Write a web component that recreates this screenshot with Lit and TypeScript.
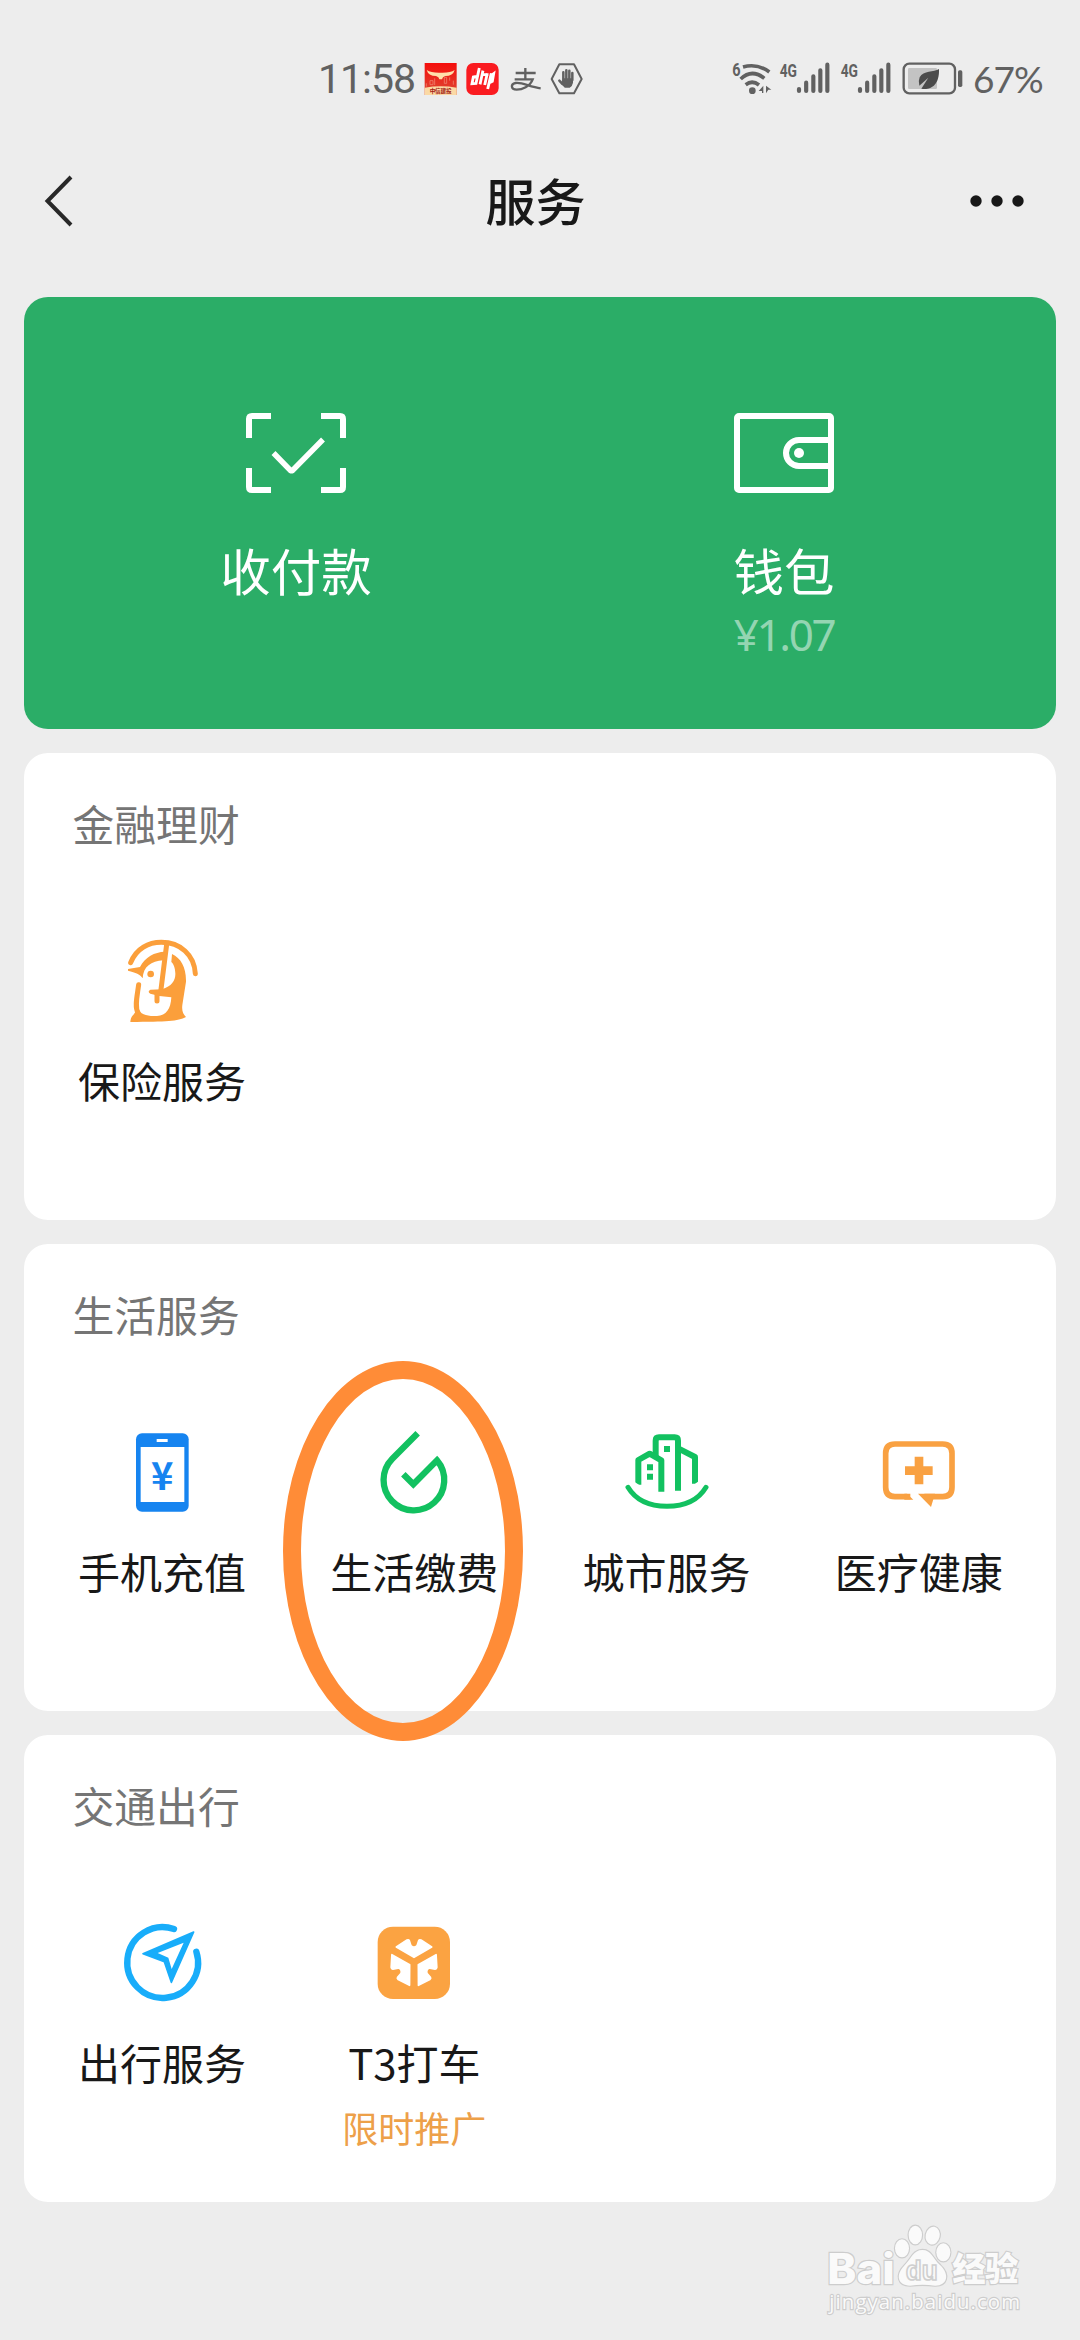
import { LitElement, html, svg, css, nothing, SVGTemplateResult } from "lit";
import { customElement, property } from "lit/decorators.js";

interface Service {
  label: string;
  note?: string;
  viewBox: string;
  icon: SVGTemplateResult;
}

const insurance = svg`
  <path d="M211 548C228 505 265 487 303 487C360 487 402 525 405 581" fill="none" stroke="#fb9f3b" stroke-width="15" stroke-linecap="round"/>
  <path d="M203 567L239 561C254 531 283 516 313 515L309 541C272 543 249 560 247 595C240 583 226 578 203 572Z" fill="#fb9f3b"/>
  <circle cx="271" cy="582" r="10" fill="#fb9f3b"/>
  <path d="M319 493L301 636M235 614C231 645 222 680 233 698M290 640V663" fill="none" stroke="#fb9f3b" stroke-width="15" stroke-linecap="round"/>
  <path d="M335 522C362 535 378 562 377 605L366 675C364 693 368 702 377 711C352 724 320 725 210 726C211 712 216 708 221 702L232 685C240 704 262 710 290 708C318 706 331 688 333 652L297 648L270 641Q260 635 270 629L305 628C335 618 346 600 345 580C344 562 340 552 333 546Z" fill="#fb9f3b"/>`;

const phone = svg`
  <rect x="227" y="460" width="158" height="235" rx="18" fill="#1684f0"/>
  <rect x="241" y="501" width="131" height="165" fill="#fff"/>
  <rect x="289" y="477" width="33" height="9" fill="#fff"/>
  <text x="306" y="629" font-size="114" font-weight="700" text-anchor="middle" fill="#1684f0" font-family="Noto Sans CJK SC, sans-serif">¥</text>`;

const drop = svg`
  <path d="M443 280L367 356A91 91 0 1 0 501 361L430 433L400 403" fill="none" stroke="#12c160" stroke-width="19"/>`;

const city = svg`
  <g fill="none" stroke="#12c160" stroke-width="18" stroke-linejoin="round">
    <path d="M284 172V122Q284 112 294 112H341Q351 112 351 122V272"/>
    <path d="M232 254V180L266 161L301 181V275"/>
    <path d="M353 146L402 171V251"/>
    <path d="M201 262C225 302 268 319 318 319S411 302 435 262" stroke-width="15" stroke-linecap="round"/>
  </g>
  <path d="M309 138h18v18h-18zM258 193h18v18h-18zM258 221h18v18h-18z" fill="#12c160"/>
  <path d="M220 245L245 262H220ZM390 260L415 242V262Z" fill="#fff"/>`;

const medical = svg`
  <path d="M1048 290H1002Q974 290 974 262V160Q974 132 1002 132H1145Q1173 132 1173 160V262Q1173 290 1145 290H1090" fill="none" stroke="#f9a142" stroke-width="17"/>
  <path d="M1030 281H1038L1057 299H1030ZM1071 281H1122L1110 321Z" fill="#f9a142"/>
  <path d="M1032 199h29v-29h26v29h28v26h-28v28h-26v-28h-29z" fill="#f9a142"/>`;

const travel = svg`
  <path d="M341 477A106.200 106.200 0 1 0 408 545" fill="none" stroke="#18adfa" stroke-width="19" stroke-linecap="round"/>
  <path d="M400 486L333 637L312 575L248 551Z" fill="#18adfa" stroke="#18adfa" stroke-width="5" stroke-linejoin="round"/>
  <path d="M370 518L334 597L324 563L292 549Z" fill="#fff"/>`;

const petal = "M1009 531L1041 510Q1046 508 1048 512L1053 527Q1062 536 1071 527L1076 512Q1078 508 1083 510L1115 531L1062 562Z";
const taxi = svg`
  <rect x="953" y="470" width="217" height="217" rx="46" fill="#fba342"/>
  <g fill="#fff" stroke="#fff" stroke-width="5" stroke-linejoin="round">
    <path d=${petal}/>
    <path d=${petal} transform="rotate(120 1062 577)"/>
    <path d=${petal} transform="rotate(240 1062 577)"/>
  </g>`;

const sections: { title: string; items: Service[] }[] = [
  { title: "金融理财", items: [{ label: "保险服务", viewBox: "161 459 288 288", icon: insurance }] },
  {
    title: "生活服务",
    items: [
      { label: "手机充值", viewBox: "161 432 288 288", icon: phone },
      { label: "生活缴费", viewBox: "288 252 288 288", icon: drop },
      { label: "城市服务", viewBox: "174 72 288 288", icon: city },
      { label: "医疗健康", viewBox: "930 72 288 288", icon: medical },
    ],
  },
  {
    title: "交通出行",
    items: [
      { label: "出行服务", viewBox: "161 435 288 288", icon: travel },
      { label: "T3打车", note: "限时推广", viewBox: "918 435 288 288", icon: taxi },
    ],
  },
];

@customElement("status-bar")
class StatusBar extends LitElement {
  static styles = css`
    :host { display: flex; height: 120px; padding: 38px 0 0 318px; box-sizing: border-box; color: #616161; }
    .time { flex: none; width: 105px; font: 400 41px/82px Roboto, sans-serif; letter-spacing: -1px; white-space: nowrap; }
    .apps { width: 162px; height: 80px; margin-top: 2px; }
    .signals { width: 235px; height: 80px; margin: 2px 0 0 145px; }
    .battery { flex: none; margin-left: 8px; font: 400 37px/82px Lato, sans-serif; letter-spacing: -1px; white-space: nowrap; }
    svg { display: block; flex: none; }
  `;

  private bars(x: number) {
    return svg`<g stroke="#616161" stroke-width="12.5" stroke-linecap="round">
      <path d="M${x} 147V153M${x + 21.5} 128V153M${x + 43} 109V153M${x + 64} 91V153M${x + 85} 74V153"/></g>
      <text x=${x - 58} y="110" font-size="57" font-weight="700" textLength="52" lengthAdjust="spacingAndGlyphs" fill="#616161" font-family="Roboto, sans-serif">4G</text>`;
  }

  render() {
    return html`
      <span class="time">11:58</span>
      <svg class="apps" viewBox="370 0 486 240">
        <defs><linearGradient id="red" x1="0" y1="0" x2="0" y2="1"><stop offset="0" stop-color="#f50d0b"/><stop offset="1" stop-color="#dc4a35"/></linearGradient></defs>
        <rect x="375" y="69" width="96" height="96" fill="url(#red)"/>
        <path d="M381 90Q395 99 423 98Q452 99 465 90Q460 108 437 108L430 112L427 118H419L416 112L409 108Q386 108 381 90Z" fill="#ffe0ac"/>
        <path d="M391 122h9v12h-9zM405 115v20M434 112h7v18h-7zM450 112v10M461 122v12M380 130v10" fill="none" stroke="#ee806c" stroke-width="2.5"/>
        <path d="M375 143Q423 135 471 143V165H375Z" fill="#fbd9a5"/>
        <text x="390" y="160" font-size="17" font-weight="700" textLength="66" fill="#a32014" font-family="Noto Sans CJK SC, sans-serif">中信建投</text>
        <rect x="500" y="69" width="97" height="96" rx="21" fill="#fa1b20"/>
        <g fill="none" stroke="#fff" stroke-width="8.5" stroke-linecap="square">
          <path d="M538 88L529 130L517 131L521 111L531 109M549 96L542 129M562 104L556 131M549 104L562 104M574 104L565 143M575 106L582 101L578 124L570 128"/>
        </g>
        <g fill="none" stroke="#616161" stroke-width="7">
          <path d="M648 99H708M677 84V117M645 118H699C691 140 667 149 651 149C633 149 632 132 648 129C668 126 690 141 723 145"/>
        </g>
        <path d="M756 117L779 73H823L846 117L823 160H779Z" fill="none" stroke="#616161" stroke-width="6" stroke-linejoin="round"/>
        <g stroke="#616161" stroke-width="7.5" stroke-linecap="round" fill="#616161">
          <path d="M791 118V97M800 116V91M809 116V92M818 120V99M779 122L788 132" fill="none"/>
          <path d="M791 117H818V128Q816 138 810 141H796Q788 134 786 128Z" stroke-width="4"/>
        </g>
      </svg>
      <svg class="signals" viewBox="60 0 705 240">
        <text x="67" y="107" font-size="53" font-weight="700" textLength="25" lengthAdjust="spacingAndGlyphs" fill="#616161" font-family="Roboto, sans-serif">6</text>
        <g fill="none" stroke="#616161" stroke-width="11">
          <path d="M99 81Q142 69 178 96M92 117Q125 85 163 115M107 134Q127 119 147 135"/>
        </g>
        <circle cx="127" cy="152" r="10" fill="#616161"/>
        <path d="M146 153L160 137V159H156V153ZM168 137L184 149H175L168 160Z" fill="#616161"/>
        ${this.bars(267)}${this.bars(450)}
        <rect x="581" y="71" width="154" height="89" rx="17" fill="none" stroke="#616161" stroke-width="7"/>
        <rect x="594" y="84" width="87" height="63" rx="4" fill="#c3c3c3"/>
        <rect x="744" y="91" width="13" height="50" rx="5" fill="#616161"/>
        <path d="M687 87C672 98 640 90 629 112Q624 124 628 137L655 113L634 146C660 151 689 138 687 87Z" fill="#4b4b4b"/>
      </svg>
      <span class="battery">67%</span>`;
  }
}

@customElement("nav-header")
class NavHeader extends LitElement {
  static styles = css`
    :host { display: flex; align-items: center; justify-content: space-between; height: 162px; padding: 0 56px 0 43px; box-sizing: border-box; }
    .back { width: 32px; height: 56px; }
    .more { width: 56px; height: 16px; }
    .side { display: flex; width: 100px; }
    .right { justify-content: flex-end; margin-right: -1px; }
    .title { margin: -4px -3px 0 0; font: 500 50px/74px "Noto Sans CJK SC", sans-serif; color: #181818; }
  `;
  render() {
    return html`
      <div class="side"><svg class="back" viewBox="0 0 32 56"><path d="M28 4L4.500 28L28 52" fill="none" stroke="#282828" stroke-width="4"/></svg></div>
      <div class="title">服务</div>
      <div class="side right"><svg class="more" viewBox="0 0 56 16"><g fill="#181818"><circle cx="7" cy="8" r="5.700"/><circle cx="28" cy="8" r="5.700"/><circle cx="49" cy="8" r="5.700"/></g></svg></div>`;
  }
}

@customElement("wallet-card")
class WalletCard extends LitElement {
  static styles = css`
    :host { display: grid; grid-template-columns: 1fr 1fr; height: 432px; padding: 0 28px; box-sizing: border-box; border-radius: 24px; background: #2bad67; color: #fff; }
    .entry { display: flex; flex-direction: column; align-items: center; padding-top: 115px; }
    .icon { width: 102px; height: 82px; }
    .name { margin-top: 38px; font: 400 50.500px/74px "Noto Sans CJK SC", sans-serif; }
    .sum { margin-top: 1px; font: 400 44px/54px "Noto Sans", sans-serif; letter-spacing: -2.400px; color: #94d5b2; }
  `;
  render() {
    return html`
      <div class="entry">
        <svg class="icon" viewBox="0 0 102 82"><g fill="none" stroke="#fff" stroke-width="6">
          <path d="M26 4H7Q4 4 4 7V26M76 4H95Q98 4 98 7V26M4 56V75Q4 78 7 78H26M98 56V75Q98 78 95 78H76"/>
          <path d="M28.500 41L45.500 58.500Q46.500 59 47.500 58.500L78 27.500" stroke-width="5.500"/></g></svg>
        <div class="name">收付款</div>
      </div>
      <div class="entry">
        <svg class="icon" viewBox="0 0 102 82"><g fill="none" stroke="#fff" stroke-width="6">
          <rect x="4" y="4" width="94" height="74" rx="2"/>
          <path d="M98 28H66A13 13 0 0 0 66 54H98"/></g><circle cx="66" cy="41" r="5" fill="#fff"/></svg>
        <div class="name">钱包</div>
        <div class="sum">¥1.07</div>
      </div>`;
  }
}

@customElement("service-card")
class ServiceCard extends LitElement {
  @property() heading = "";
  @property({ attribute: false }) items: Service[] = [];
  static styles = css`
    :host { display: block; height: 467px; padding: 39px 11px 0 12px; box-sizing: border-box; border-radius: 24px; background: #fff; font-family: "Noto Sans CJK SC", sans-serif; }
    .heading { padding-left: 36.500px; font-size: 41.800px; line-height: 62px; color: #757575; }
    .grid { display: grid; grid-template-columns: repeat(4, 1fr); padding-top: 79px; }
    .item { display: flex; flex-direction: column; align-items: center; }
    .icon { width: 96px; height: 96px; }
    .label { margin-top: 20px; font-size: 42px; line-height: 62px; color: #181818; white-space: nowrap; }
    .note { margin-top: 8px; font-size: 36px; line-height: 52px; color: #eda049; }
  `;
  render() {
    return html`
      <div class="heading">${this.heading}</div>
      <div class="grid">
        ${this.items.map((item) => html`
          <div class="item">
            <svg class="icon" viewBox=${item.viewBox}>${item.icon}</svg>
            <div class="label">${item.label}</div>
            ${item.note ? html`<div class="note">${item.note}</div>` : nothing}
          </div>`)}
      </div>`;
  }
}

@customElement("app-root")
class AppRoot extends LitElement {
  static styles = css`
    :host { display: block; position: relative; width: 1080px; height: 2340px; overflow: hidden; background: #ededed; }
    .cards { display: flex; flex-direction: column; gap: 24px; padding: 15px 24px 0; }
    .ring { position: absolute; left: 283px; top: 1361px; width: 240px; height: 380px; box-sizing: border-box; border: 18px solid #ff8c37; border-radius: 50%; }
    .watermark { position: absolute; left: 820px; top: 2215px; width: 214px; height: 110px; }
  `;
  render() {
    return html`
      <status-bar></status-bar>
      <nav-header></nav-header>
      <div class="cards">
        <wallet-card></wallet-card>
        ${sections.map((s) => html`<service-card .heading=${s.title} .items=${s.items}></service-card>`)}
      </div>
      <div class="ring"></div>
      <svg class="watermark" viewBox="60 105 642 330">
        <g fill="#fafafa" stroke="#cdcdcd" stroke-width="7" paint-order="stroke">
          <text x="82" y="312" font-size="126" font-weight="800" textLength="202" lengthAdjust="spacingAndGlyphs" font-family="Inter, sans-serif">Bai</text>
          <ellipse cx="306" cy="205" rx="21" ry="27"/>
          <ellipse cx="346" cy="165" rx="20" ry="28"/>
          <ellipse cx="398" cy="167" rx="21" ry="27" transform="rotate(12 398 167)"/>
          <ellipse cx="430" cy="217" rx="21" ry="27"/>
          <path d="M367 210C395 210 397 235 420 255C452 285 440 318 405 317Q367 312 330 317C293 316 286 285 312 258C335 235 340 210 367 210Z"/>
          <text x="457" y="304" font-size="100" font-weight="900" textLength="198" font-family="Noto Sans CJK SC, sans-serif">经验</text>
          <text x="88" y="388" font-size="61" font-weight="400" textLength="572" font-family="Open Sans, sans-serif">jingyan.baidu.com</text>
        </g>
        <text x="317" y="299" font-size="84" font-weight="700" textLength="96" lengthAdjust="spacingAndGlyphs" fill="#fafafa" stroke="#cfcfcf" stroke-width="5" font-family="Liberation Sans, sans-serif">du</text>
      </svg>`;
  }
}
